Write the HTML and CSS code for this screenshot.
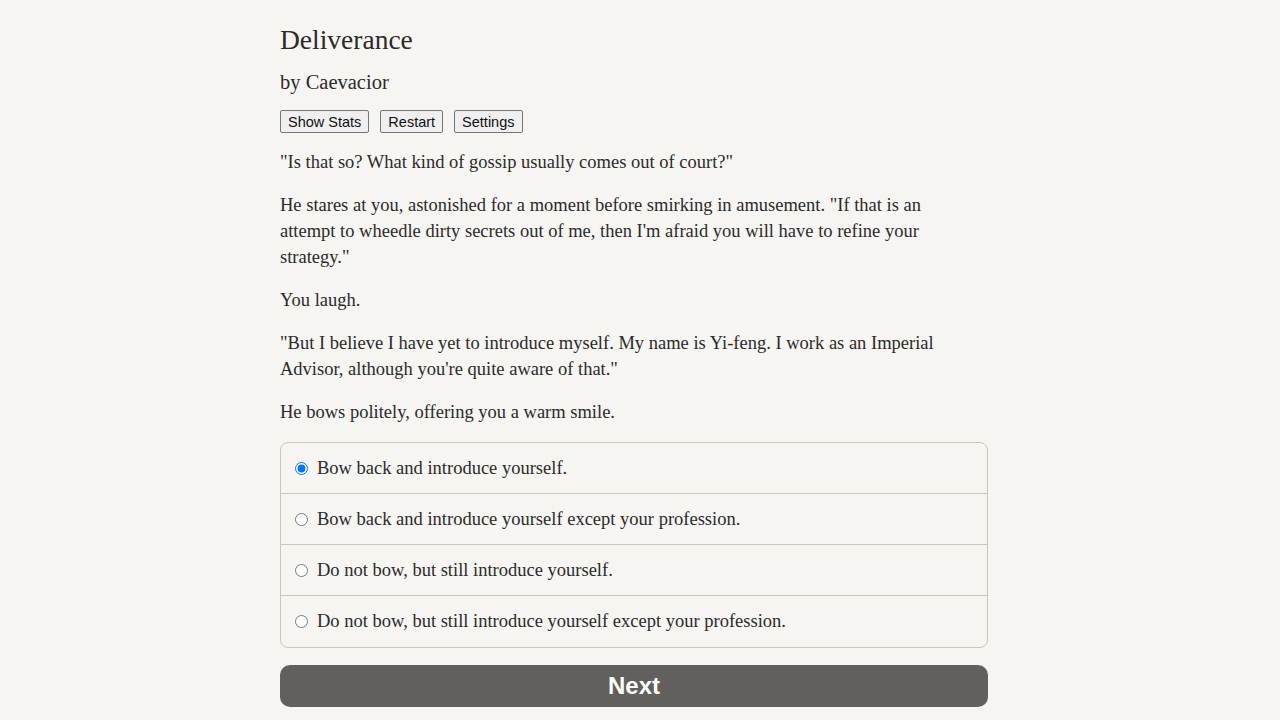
FILE: index.html
```html
<!DOCTYPE html>
<html>
<head>
<meta charset="utf-8">
<link rel="stylesheet" href="styles.css">
</head>
<body>
<div class="container">
  <h1 class="title">Deliverance</h1>
  <h2 class="author">by Caevacior</h2>
  <div class="buttons">
    <button class="btn">Show Stats</button>
    <button class="btn">Restart</button>
    <button class="btn">Settings</button>
  </div>
  <div class="text">
    <p>"Is that so? What kind of gossip usually comes out of court?"</p>
    <p>He stares at you, astonished for a moment before smirking in amusement. "If that is an attempt to wheedle dirty secrets out of me, then I'm afraid you will have to refine your strategy."</p>
    <p>You laugh.</p>
    <p>"But I believe I have yet to introduce myself. My name is Yi-feng. I work as an Imperial Advisor, although you're quite aware of that."</p>
    <p>He bows politely, offering you a warm smile.</p>
  </div>
  <div class="choices">
    <label class="choice"><input type="radio" name="c" checked> Bow back and introduce yourself.</label>
    <label class="choice"><input type="radio" name="c"> Bow back and introduce yourself except your profession.</label>
    <label class="choice"><input type="radio" name="c"> Do not bow, but still introduce yourself.</label>
    <label class="choice"><input type="radio" name="c"> Do not bow, but still introduce yourself except your profession.</label>
  </div>
  <button class="next">Next</button>
</div>
</body>
</html>
```

FILE: styles.css
```css
html, body {
  margin: 0;
  padding: 0;
  background: #f7f5f1;
}
body {
  color: #2b2b2b;
  font-family: "Liberation Serif", "DejaVu Serif", serif;
  font-size: 18.5px;
  line-height: 26px;
  padding-right: 12px;
}
.container {
  width: 708px;
  margin: 0 auto;
  padding-top: 24px;
}
.title {
  font-weight: normal;
  font-size: 27.5px;
  line-height: 32px;
  margin: 0 0 13px 0;
}
.author {
  font-weight: normal;
  font-size: 20.5px;
  line-height: 26px;
  margin: 0 0 15px 0;
}
.buttons {
  display: flex;
  gap: 11px;
}
.btn {
  font-family: "Liberation Sans", Arial, sans-serif;
  font-size: 14.5px;
  color: #111;
  background: #efefef;
  border: 1px solid #767676;
  border-radius: 2px;
  padding: 1px 7px;
  height: 23px;
}
.text {
  margin-top: 16px;
  padding-right: 12px;
}
.text p {
  margin: 0 0 17px 0;
}
.choices {
  border: 1px solid #c9c6c0;
  border-radius: 8px;
  margin-top: 17px;
}
.choice {
  display: flex;
  align-items: center;
  padding: 12px 14px;
  border-top: 1px solid #c9c6c0;
}
.choice:first-child {
  border-top: none;
}
.choice:last-child {
  padding-bottom: 13px;
}
.choice input {
  margin: 0 9px 0 0;
  width: 13px;
  height: 13px;
}
.next {
  display: block;
  width: 100%;
  margin-top: 17px;
  height: 42px;
  border: none;
  border-radius: 10px;
  background: #62605c;
  color: #fff;
  font-family: "Liberation Sans", Arial, sans-serif;
  font-weight: bold;
  font-size: 24px;
}
```
